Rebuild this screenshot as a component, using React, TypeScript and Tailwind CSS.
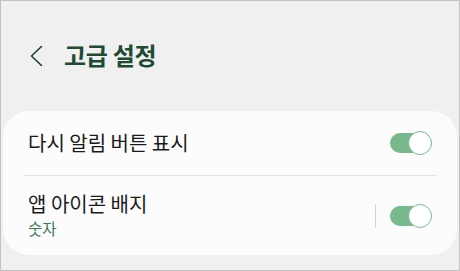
import React from "react";

function Toggle() {
  return (
    <div className="relative w-[42px] h-[24px] flex items-center">
      <div className="absolute left-0 right-[2px] top-[2px] bottom-[2px] rounded-full bg-[#78b98b]" />
      <div className="absolute right-0 top-0 w-[24px] h-[24px] rounded-full bg-white border-[1.5px] border-[#78b98b]" />
    </div>
  );
}

export default function App() {
  return (
    <div
      className="w-[460px] h-[271px] border border-[#c2c2c2] bg-[#f0f0f0] flex flex-col"
      style={{ fontFamily: '"Noto Sans CJK KR", "Noto Sans", sans-serif' }}
    >
      <div className="h-[110px] flex items-center pl-[28px] pb-[2px]">
        <svg width="15" height="22" viewBox="0 0 15 22" className="mt-[2px]">
          <path d="M12.5 1.5 L2.5 11 L12.5 20.5" fill="none" stroke="#1c3b2a" strokeWidth="1.6" strokeLinecap="round" strokeLinejoin="round" />
        </svg>
        <span className="ml-[20px] text-[24px] font-bold text-[#1e4b33] leading-none tracking-[-0.3px]">고급 설정</span>
      </div>
      <div className="mx-[2px] bg-[#fcfcfc] rounded-[26px] flex flex-col">
        <div className="h-[64px] flex items-center justify-between pl-[25px] pr-[25px]">
          <span className="text-[20px] text-[#1a1a1a] leading-none">다시 알림 버튼 표시</span>
          <Toggle />
        </div>
        <div className="mx-[20px] h-px bg-[#e4e4e4]" />
        <div className="h-[79px] flex items-center justify-between pl-[25px] pr-[25px]">
          <div className="flex flex-col pb-[1px]">
            <span className="text-[20px] text-[#1a1a1a] leading-[24px]">앱 아이콘 배지</span>
            <span className="text-[15.5px] text-[#3e7a52] leading-[20px] mt-[2px]">숫자</span>
          </div>
          <div className="flex items-center">
            <div className="w-px h-[24px] bg-[#d4d4d4] mr-[14px]" />
            <Toggle />
          </div>
        </div>
      </div>
    </div>
  );
}
